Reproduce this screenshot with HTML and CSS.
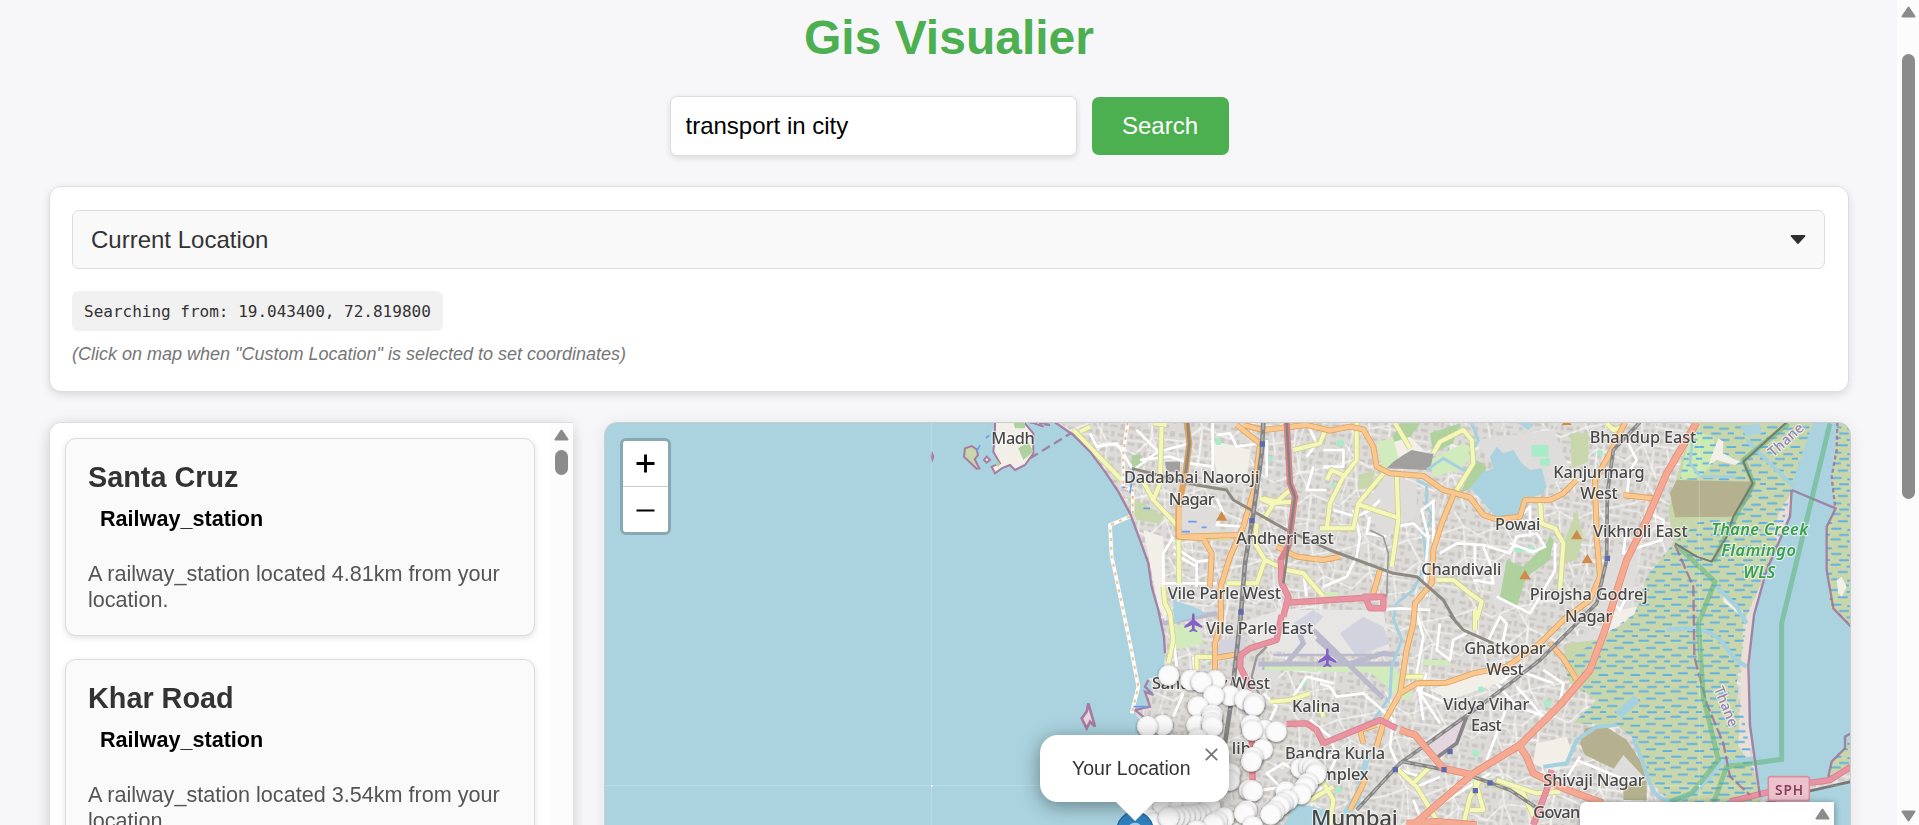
FILE: index.html
```html
<!DOCTYPE html>
<html lang="en">
<head>
<meta charset="utf-8">
<title>Gis Visualier</title>
<link rel="stylesheet" href="styles.css">
</head>
<body>
<main class="page">
  <h1 class="title">Gis Visualier</h1>
  <div class="search">
    <input class="search-input" type="text" value="transport in city">
    <button class="search-button">Search</button>
  </div>
  <section class="location">
    <div class="select"><span>Current Location</span><svg width="16" height="10" viewBox="0 0 16 10"><path d="M1.500 0h13q1.400.2.6 1.600L8.800 8.600q-.8.8-1.600 0L.9 1.600Q.1.2 1.500 0z" fill="#2f2f2f"/></svg></div>
    <div class="coords">Searching from: 19.043400, 72.819800</div>
    <p class="hint">(Click on map when "Custom Location" is selected to set coordinates)</p>
  </section>
  <div class="content">
    <section class="results">
      <div class="cards">
        <article class="card"><h2>Santa Cruz</h2><h3>Railway_station</h3><p>A railway_station located 4.81km from your location.</p></article>
        <article class="card"><h2>Khar Road</h2><h3>Railway_station</h3><p>A railway_station located 3.54km from your location.</p></article>
      </div>
      <div class="track"><svg class="arrow" width="15" height="12" viewBox="0 0 15 12"><path d="M7.500 1.500 13.500 10.500H1.500z"/></svg><i class="thumb"></i></div>
    </section>
    <section class="map">
      <svg class="tiles" viewBox="-1275 39 3738 1206">
        <defs>
          <pattern id="build" width="150" height="140" patternUnits="userSpaceOnUse" patternTransform="rotate(8)">
            <rect width="150" height="140" fill="#dddbd8"/>
            <g fill="#cbc8c4"><path d="M4 6h16v11H4zM27 3h9v18h-9zM44 10h21v9H44zM75 4h12v12H75zM95 8h22v8H95zM126 3h14v17h-14zM8 30h10v14H8zM25 33h20v8H25zM54 28h11v19H54zM76 29h15v8H76zM101 27h9v17h-9zM120 32h20v9h-20zM4 55h21v8H4zM35 52h12v17H35zM56 58h19v9H56zM86 49h10v18H86zM106 54h17v10h-17zM132 51h11v14h-11zM7 78h13v16H7zM29 81h17v8H29zM55 76h9v17h-9zM74 80h20v12H74zM105 75h10v13h-10zM125 79h19v9h-19zM5 107h20v9H5zM34 102h11v20H34zM55 108h18v10H55zM84 101h9v17h-9zM103 106h18v11h-18zM131 101h10v20h-10zM15 126h14v9H15zM70 127h22v7H70zM110 126h11v10h-11z"/></g>
            <path d="M0 48H52L68 70H150M70 0 72 70 60 140" fill="none" stroke="#ecebe8" stroke-width="4"/>
          </pattern>
          <pattern id="streets" width="290" height="250" patternUnits="userSpaceOnUse" patternTransform="rotate(-9)">
            <path d="M0 60 70 48 110 80 190 62 290 60M50 0 70 48 60 140 84 250M190 0V62L214 130 180 250M0 180 60 140 150 166 214 130 290 180M130 166 125 250M84 215H190" fill="none" stroke="#fff" stroke-width="5" opacity=".6"/>
          </pattern>
          <pattern id="marsh" width="96" height="76" patternUnits="userSpaceOnUse">
            <path d="M4 8h26M52 14h28M26 30h25M76 35h24M-20 35h24M6 52h26M54 56h24M30 71h24M80 70h20" stroke="#62afe2" stroke-width="6" stroke-linecap="round"/>
          </pattern>
          <filter id="soft" x="-2%" y="-2%" width="104%" height="104%"><feGaussianBlur stdDeviation="2"/></filter>
          <filter id="pin" x="-40%" y="-40%" width="180%" height="180%"><feDropShadow dx="0" dy="3" stdDeviation="4" flood-color="#000" flood-opacity=".55"/></filter>
          <radialGradient id="ball"><stop offset=".75" stop-color="#fbfbfb"/><stop offset="1" stop-color="#ececec"/></radialGradient>
          <path id="land" d="M75 37 130 75 180 125 225 185 265 245 300 310 330 390 355 460 365 530 385 600 400 660 405 740 398 800 356 805 370 850 345 850 355 890 310 905 335 935 325 1000 345 1100 335 1245H2463V1060L2395 1105 2190 1150 2160 945 2155 765 2172 615 2210 480 2255 380 2285 290 2280 240 2290 210 2320 120 2350 37z"/>
          <path id="hill" d="M0-15 17 14H-17z" fill="#d08b4b"/>
          <path id="plane" d="M0-28Q4-28 4-18V-8L27 10V16L4 8V18L12 25V29L0 25-12 29V25L-4 18V8L-27 16V10L-4-8V-18Q-4-28 0-28z" fill="#8461c4"/>
          <path id="stop" d="M-8-8H8V8H-8z" fill="#5d6aad"/>
          <g id="dot"><circle r="31" fill="url(#ball)" filter="url(#pin)"/></g>
        </defs>
        <rect x="-1275" y="39" width="3738" height="1206" fill="#aad3df"/>
        <g filter="url(#soft)">
          <use href="#land" fill="url(#build)"/>
          <use href="#land" fill="url(#streets)"/>
          <!-- open ground, parks, industrial areas -->
          <g fill="#dedddb"><path d="M455 290 560 295 575 375H455zM1330 90 1570 60 1620 180 1560 225 1500 270 1400 180zM1610 690 1690 710 1730 640 1690 560 1760 400 1830 420 1800 620zM645 765h100v60H665zM1380 520l40-60 20 100-40 60z"/><path d="M1070 190l90 30v100l-100 60-60-90z"/></g>
          <g fill="#f2efe9"><path d="M340 360 400 380 410 640 385 590zM1200 840l140-50 100-20-10 40-170 60zM1520 1000l90-20 20 60-60 50-60-30zM1720 610l100-20-20 60-90 50zM1060 110l70-40 60 60-100 30zM540 90l120 30-10 90-90-20z"/></g>
          <g fill="#aed19d"><path d="M1410 560 1430 450 1480 470 1550 400 1560 375 1570 390 1560 450 1490 500 1460 590zM305 135h30v38h-30zM1110 40h60l-30 40-60 20zM1200 70l90-30-20 60-60 30zM1310 210l30-60 30 20-20 50-60 30z"/></g>
          <g fill="#c8d7ab"><path d="M1620 70h55v85l-50 20zM1600 400 1640 300 1660 380 1640 450 1600 460zM290 260l50 20 60 40-10 20-70-10zM985 195l50-15-10 50-40 10z"/></g>
          <g fill="#d2ebbd"><path d="M1040 95l50-10 20 80-50 20zM420 650l80-10 20 60-90 20zM690 750l400 20 10 20-400-10zM1000 770l90-5 60 95-30 10zM870 550l50-5 10 15-60 5zM1180 750h80v16h-80zM1200 150l100-50 40 20-50 60-80 20z"/></g>
          <g fill="#a8ebc9"><circle cx="565" cy="95" r="10"/><circle cx="720" cy="147" r="8"/><path d="M1505 105l50 0v35h-50zM1530 145l30 0v22h-30zM920 90h20v18h-20zM1450 415l60-8v14l-55 6z"/><circle cx="1552" cy="880" r="11"/><circle cx="1353" cy="838" r="9"/><circle cx="1337" cy="1030" r="10"/><circle cx="1710" cy="128" r="9"/><circle cx="910" cy="225" r="7"/><circle cx="925" cy="1140" r="10"/><circle cx="822" cy="818" r="9"/></g>
          <!-- airport -->
          <g fill="#e8e6e4"><path d="M620 640 750 600 1060 600 1080 720 900 740 700 720z"/></g>
          <g fill="#d3d3df"><path d="M930 670l70-50 60 30 20 50-100 40zM570 690l80-10-10 40-80 15zM790 640l60-40 30 20-70 70z"/></g>
          <g fill="none" stroke="#bbbacd" stroke-width="15"><path d="M400 640 560 610M685 762H1108M850 660 1060 865M860 685l80 74M960 760 1060 730 1100 735M800 650 820 700 770 760" /><path d="M730 735H1110M700 742V780" stroke-width="7"/></g>
          <!-- retail and rail yards -->
          <path d="M1170 1030 1310 920 1300 985 1220 1050z" fill="#e4d6df"/>
          <path d="M1120 135 1145 120 1210 133 1200 180 1070 175 1090 155zM405 155h45v30h-40z" fill="#a1a09e"/>
          <!-- wetland -->
          <path d="M2000 37 2350 37 2320 120 2285 240 2250 380 2210 480 2155 610 2120 820 2130 1015 2180 1100 2190 1180 1920 1175 1850 1100 1810 985 1760 945 1630 940 1700 870 1620 820 1600 760 1610 700 1700 690 1780 640 1815 610 1850 500 1930 400 1915 300 1940 200 1970 100z" fill="#c8d7ab"/>
          <path d="M1980 60 2050 80 2060 150 2010 200 1950 210z" fill="#cdebb0"/>
          <path d="M1920 250 1940 210 2175 215 2160 265 2105 320 1935 322z" fill="#b5b18f"/>
          <path d="M1650 1000 1665 955 1720 945 1790 990 1830 1050 1850 1110 1850 1170H1780V1090L1665 1035z" fill="#b5b18f"/>
          <path d="M1745 1085 1780 1035 1850 1110 1780 1130z" fill="#dedddb"/>
          <path d="M2250 300 2285 250 2280 310 2245 400 2230 370zM2215 470 2240 430 2185 600 2160 1050 2125 1010 2140 640z" fill="#eadfd6"/>
          <path d="M2000 37 2350 37 2320 120 2285 240 2250 380 2210 480 2155 610 2120 820 2160 1015 2190 1180 1920 1175 1850 1100 1810 985 1760 945 1630 940 1700 870 1620 820 1600 760 1700 690 1815 610 1850 500 1930 400 2020 325 2110 320 2175 215 1950 208 1970 100z" fill="url(#marsh)"/>
          <path d="M2035 165 2065 85 2080 95 2078 130 2130 155 2115 165 2060 150zM2080 555l60 50-10 10-50-40z" fill="#f2efe9"/>
          <!-- lakes and rivers -->
          <path d="M1320 235 1355 190 1390 175 1380 140 1400 110 1420 130 1450 120 1475 160 1500 180 1535 175 1550 230 1540 250 1500 265 1485 320 1440 325 1400 325 1350 265zM2130 50 2190 40 2195 70 2150 80zM430 570l60 20 40 20-100 30zM1465 40h50l-20 20z" fill="#aad3df"/>
          <path d="M2350 37H2422L2415 130 2405 220 2417 295 2390 350 2395 480 2405 590 2463 650V970L2400 1080 2190 1170 2155 945 2160 700 2172 600 2210 480 2250 380 2285 290 2290 210z" fill="#aad3df"/>
          <path d="M2463 1110V1245H2190L2230 1175z" fill="#aad3df"/>
          <path id="east" d="M2422 37H2463V650L2400 590 2393 480 2390 350 2417 295 2405 220 2415 130zM2463 970 2445 1015 2405 1055 2395 1100 2463 1075z" fill="#c8d7ab"/>
          <path d="M2422 37H2463V650L2400 590 2393 480 2390 350 2417 295 2405 220 2415 130zM2463 970 2445 1015 2405 1055 2395 1100 2463 1075z" fill="url(#marsh)"/>
          <path d="M2420 510l15-10 15 30-15 30-10-10z" fill="#f2efe9"/>
          <g fill="none" stroke="#a5d1df" stroke-width="9"><path d="M1190 180 1240 145 1300 180 1330 170M1160 210 1190 225 1190 290 1210 320 1180 370 1190 460 1150 540 1100 580 1090 625 1115 690 1085 770 1080 860 1030 930M1325 40 1345 90 1320 130 1340 160"/><path d="M1810 985Q1840 1060 1860 1120T1940 1170 2070 1060L2200 1040M1540 1070 1610 1060 1640 990 1700 950 1760 945M2150 90 2230 170 2290 230" stroke-width="12"/><path d="M1990 60 1980 160 2010 200 2120 200" stroke-width="8"/><path d="M1910 660Q2030 640 2080 700 2110 750 2150 770M2060 530 2120 590 2150 640" stroke-width="13"/><path d="M1765 915 1820 865" stroke-width="26"/></g>
          <path d="M1000 1050 1020 1040 990 1180 940 1230 940 1200 975 1150zM760 1245 800 1180 890 1200 900 1245z" fill="#aad3df"/>
          <!-- local streets -->
          <g fill="none" stroke="#fff" stroke-width="8" stroke-linejoin="round">
            <path d="M180 70 200 110 260 100 310 180 390 120M320 60 385 125 480 100M330 150 420 140 480 160 550 170M548 37V200M560 75 600 70 620 110 690 100M430 380 400 430V520H560M430 410 500 455 540 450M500 455V530M430 430 500 470M710 90V200M830 37 860 100 830 140M850 170 830 240 890 240M880 120h60v50h-60M910 300 980 320 1020 300 1050 270M970 300 990 380 980 440 950 500 880 530M820 490 830 560M560 265 580 310 560 345 650 350M1020 320l-10 50 60 10M1100 350 1150 340 1190 380"/>
            <path d="M1215 270 1175 300 1195 380 1185 500 1190 560M1210 270 1210 400M1230 430 1280 400 1360 405 1440 430 1460 380 1520 370 1545 410 1510 425 1440 400M1335 400V500M1360 410 1380 460 1390 520 1330 510M1480 310 1500 290V380M1575 400V480L1530 560 1500 610 1400 560M870 820 900 830 920 860 1000 850 1090 930M1040 600 1110 595 1200 600M1160 610 1180 680 1160 790 1180 930M1230 640 1220 720 1260 750 1270 690 1310 670M1370 700 1410 620 1430 640 1410 740M1160 840 1240 875M1190 790 1170 850 1230 940M1430 890 1370 1050M1410 820 1460 780 1570 820M1400 820 1460 890 1550 920M1540 780 1600 820 1590 880M1460 830 1540 920M1160 1130 1230 1100M1150 1170 1180 1245M1220 1190l160-100M1640 1050 1800 1115M1650 1040l-50 80M1730 560 1770 600 1790 560M1790 90 1820 150 1800 180 1790 260M1860 310 1900 330 1895 390 1830 410 1780 430 1790 350M1090 930 1080 1010 1110 1080 1170 1100"/>
            <path d="M430 680 440 770M490 740 500 840M430 920 460 850M700 850 740 890 720 930M840 930 900 980 920 1040M790 860l40-60 80 20M860 1030l60 10-40 90-60 40M640 1150 760 1130M710 1090l50-30 60 40-50 50z"/>
          </g>
          <!-- yellow roads -->
          <g fill="none" stroke="#cdd48a" stroke-width="17" stroke-linejoin="round"><path d="M130 60 275 210M150 65 180 50M395 37 390 220 370 270M340 215 370 270 445 350 447 520M700 265 740 275 780 240M690 265 720 280 790 275M735 275 700 330M680 340 675 400 705 450 770 480 820 490 880 560M705 450 680 520H590M520 382H600M400 530 405 580 420 610 430 690 415 760M370 40 410 45M890 360 900 280 940 200 980 150 980 37M870 355 970 355 985 280 1060 190M990 285 1110 325M790 120 870 100 890 50M500 780V740L550 742M720 875 780 870 840 850M1095 39 1140 115M1210 130 1230 95 1300 60 1325 90 1330 160 1280 240M1100 190 1105 330 1085 470M1220 510 1270 510 1320 550 1355 575 1340 630M1335 600V660M1530 270 1535 340 1575 355 1600 400 1590 540M890 210 905 180 950 200M1120 800H1180M1105 1080 1160 1130 1220 1230M1200 1070 1150 1120M1350 1110 1320 1160 1300 1245M1350 1110 1480 1150 1520 1240M1400 1110 1520 1150 1590 1145M1335 1110 1360 1200 1320 1200M870 1100 910 1170 900 1245M840 1170 910 1130M870 890 880 920M1730 40l20 20 30-10"/></g>
          <g fill="none" stroke="#f5f6ba" stroke-width="12" stroke-linejoin="round"><path d="M130 60 275 210M150 65 180 50M395 37 390 220 370 270M340 215 370 270 445 350 447 520M700 265 740 275 780 240M690 265 720 280 790 275M735 275 700 330M680 340 675 400 705 450 770 480 820 490 880 560M705 450 680 520H590M520 382H600M400 530 405 580 420 610 430 690 415 760M370 40 410 45M890 360 900 280 940 200 980 150 980 37M870 355 970 355 985 280 1060 190M990 285 1110 325M790 120 870 100 890 50M500 780V740L550 742M720 875 780 870 840 850M1095 39 1140 115M1210 130 1230 95 1300 60 1325 90 1330 160 1280 240M1100 190 1105 330 1085 470M1220 510 1270 510 1320 550 1355 575 1340 630M1335 600V660M1530 270 1535 340 1575 355 1600 400 1590 540M890 210 905 180 950 200M1120 800H1180M1105 1080 1160 1130 1220 1230M1200 1070 1150 1120M1350 1110 1320 1160 1300 1245M1350 1110 1480 1150 1520 1240M1400 1110 1520 1150 1590 1145M1335 1110 1360 1200 1320 1200M870 1100 910 1170 900 1245M840 1170 910 1130M870 890 880 920M1730 40l20 20 30-10"/></g>
          <!-- orange roads -->
          <g fill="none" stroke="#dfa35d" stroke-width="18" stroke-linejoin="round"><path d="M470 37 478 100 465 200 445 290V380L520 385 545 430 540 530M447 380 640 375M620 45 690 100 675 230 640 350 600 440 572 530 573 640 555 700V780M640 45 700 60 830 45 900 62 960 50 1000 58 1030 110 1040 170 1080 190 1180 198 1240 240 1320 262 1360 315 1400 328 1470 320 1485 270 1560 270 1600 250 1640 210M740 410 800 440 880 450 930 440M1270 255 1235 340 1210 420 1205 520 1155 580 1150 640 1130 720 1110 850 1060 940 1040 1010M1050 480 1030 550M550 745 640 730M1110 850 1160 820 1250 818 1330 790 1430 770 1530 700 1600 630 1680 570 1710 500 1700 380 1695 210 1740 130 1785 37M1560 700 1600 745 1640 810M1040 945 990 960 1000 1000M1010 1100 960 1200M1780 255 1870 265"/></g>
          <g fill="none" stroke="#fac78e" stroke-width="13" stroke-linejoin="round"><path d="M447 290V380L520 385 545 430 540 530M447 380 640 375M620 45 690 100 675 230 640 350 600 440 572 530 573 640 555 700V780M640 45 700 60 830 45 900 62 960 50 1000 58 1030 110 1040 170 1080 190 1180 198 1240 240 1320 262 1360 315 1400 328 1470 320 1485 270 1560 270 1600 250 1640 210M740 410 800 440 880 450 930 440M1270 255 1235 340 1210 420 1205 520 1155 580 1150 640 1130 720 1110 850 1060 940 1040 1010M1050 480 1030 550M550 745 640 730M1110 850 1160 820 1250 818 1330 790 1430 770 1530 700 1600 630 1680 570 1710 500 1700 380 1695 210 1740 130 1785 37M1560 700 1600 745 1640 810M1040 945 990 960 1000 1000M1010 1100 960 1200M1780 255 1870 265"/></g>
          <!-- metro and rail -->
          <g fill="none" stroke-linejoin="round"><path d="M305 175 500 225 590 240 610 270 770 360 900 420 1090 490 1160 500 1240 570 1280 640M473 39 478 100 467 190M1260 615 1300 660 1390 700" stroke="#8d8a82" stroke-width="9"/><path d="M1020 360 1060 380 1075 430 1070 560" stroke="#9c9c9c" stroke-width="5"/><path d="M700 37 695 130 670 310 645 460 632 620 615 770 600 900 585 1000" stroke="#868686" stroke-width="14"/><path d="M700 37 695 130 670 310 645 460 632 620 615 770 600 900" stroke="#b0b0b0" stroke-width="5" stroke-dasharray="22 14"/><path d="M1830 37 1750 120 1732 250 1730 450 1700 580 1640 640 1530 750 1440 820 1320 910 1110 1060 980 1200M1310 920 1280 1000 1210 1050M1120 1055 1300 1090 1440 1140 1560 1220" stroke="#868686" stroke-width="11"/><path d="M1830 37 1750 120 1732 250 1730 450 1700 580 1640 640 1530 750 1440 820 1320 910 1110 1060 980 1200M1120 1055 1300 1090 1440 1140 1560 1220" stroke="#b5b5b5" stroke-width="4" stroke-dasharray="22 14"/><path d="M710 710 680 740 665 800 690 860" stroke="#999" stroke-width="7"/></g>
          <!-- trunk roads -->
          <g fill="none" stroke="#d9838d" stroke-width="19" stroke-linejoin="round"><path d="M755 615 740 690 660 715 632 735 630 770 665 840M770 37 780 220 795 260 775 410 752 450 755 520 775 560 760 620M775 578 900 570 1060 560H1005L1020 595H1060V560M665 980 668 1110M770 942 830 940 860 960 880 1000 1050 930 1100 955M1565 1080 1550 1140 1510 1245M2100 1175 2300 1125 2400 1110 2463 1070"/></g>
          <g fill="none" stroke="#e892a2" stroke-width="14"><path d="M755 615 740 690 660 715 632 735 630 770 665 840M752 450 755 520 775 560 760 620M775 578 900 570 1060 560H1005L1020 595H1060V560M770 942 830 940 860 960 880 1000 1050 930 1100 955M1565 1080 1550 1140 1510 1245M2100 1175 2300 1125 2400 1110 2463 1070M665 1080V1110"/></g>
          <path d="M770 37 780 220 795 260 775 410 760 520" fill="none" stroke="#89837f" stroke-width="8"/>
          <g fill="none" stroke="#e58f78" stroke-width="22" stroke-linejoin="round"><path d="M2000 37 1910 190 1850 330 1790 450 1755 560 1725 660 1680 780 1590 885 1470 1005 1330 1090 1150 1245M1110 960 1155 975 1240 1075 1330 1095M1470 1010 1490 1040 1510 1090 1600 1135 1720 1180M1130 1240 1220 1235 1340 1245"/></g>
          <g fill="none" stroke="#f6a992" stroke-width="17" stroke-linejoin="round"><path d="M2000 37 1910 190 1850 330 1790 450 1755 560 1725 660 1680 780 1590 885 1470 1005 1330 1090 1150 1245M1110 960 1155 975 1240 1075 1330 1095M1470 1010 1490 1040 1510 1090 1600 1135 1720 1180M1130 1240 1220 1235 1340 1245"/></g>
          <path d="M2210 1178 2330 1145 2463 1115" fill="none" stroke="#777" stroke-width="8"/>
          <!-- coast boundaries -->
          <g fill="none" stroke="#9b6795" stroke-width="7" opacity=".75"><path d="M75 37 130 75 180 125 225 185 265 245 300 310 330 390 355 460 365 530 385 600 402 680 405 730M355 810 345 830 370 855 345 845 360 890 315 900 340 920 325 945M2285 240 2417 295 2390 350 2390 480 2410 595 2463 650M2285 240 2280 320 2210 480 2172 615 2155 765 2160 945 2190 1160M2463 970 2445 980 2445 1015 2405 1055 2395 1100"/><path d="M0 145 125 68M0 37 60 45" stroke-dasharray="28 14"/><path d="M2422 37 2420 120 2405 200 2415 290" stroke-dasharray="12 8"/><path d="M1935 405 1990 530 1993 740 2030 880 2080 1000 2100 1100 2160 1155" stroke-dasharray="34 10"/></g>
          <g fill="none" stroke="#5db27a" stroke-width="15" opacity=".55"><path d="M2275 40 2140 150 2170 220 2090 370 2050 455M1945 410 2055 515 2005 640 2020 860 2065 1050 1985 1150 1920 1175M2050 1180 2090 1070 2255 1048 2255 640 2400 40"/></g>
          <path d="M2270 37 2140 155 2168 220 2110 320 2090 380 2045 455 2000 440 1935 400" fill="none" stroke="#777a6c" stroke-width="6"/>
          <!-- ferry route -->
          <path d="M300 320 240 345 245 440 275 580 300 700 325 830 305 910" fill="none" stroke="#fff" stroke-width="11"/><path d="M300 320 240 345 245 440 275 580 300 700 325 830 305 910" fill="none" stroke="#f1c99a" stroke-width="7" stroke-dasharray="10 16"/>
          <path d="M293 37 280 130 280 230 308 240 308 310" fill="none" stroke="#fff" stroke-width="10"/><path d="M293 37 280 130 280 230 308 240 308 310" fill="none" stroke="#f1b689" stroke-width="6" stroke-dasharray="9 13"/>
          <!-- islands -->
          <g fill="#f2efe9" stroke="#a77ba0" stroke-width="6"><path d="M-105 35V80L-110 125 -90 160 -115 170 -105 190 -85 175 -60 165 -45 180 -15 165 10 130V70L-20 35zM-130 140l10 10-10 8-8-8z"/><path d="M-195 115-175 108-160 118-156 135-166 148-152 175-160 176-182 155-198 140z" fill="#c8d7ab"/><path d="M155 925 170 905 175 880 182 905 195 950 180 935 170 955z" fill="#e6d6e0" stroke-width="8"/><path d="M0 35 40 50 30 40 55 37M-293 132l3 8-3 8-2-8z"/></g>
          <path d="M-50 37h35v18h-30zM-35 115l30-20 15 30-30 25zM-98 150l8 10-5 12-8-8z" fill="#aed19d"/>
          <path d="M-132 84 -122 76M-150 105-160 125M310 180l-10 70M275 232h10M340 295h20M475 335h25M455 365h25M515 352h15M310 890h40" fill="none" stroke="#6a9cf0" stroke-width="5"/>
        </g>
        <use href="#hill" x="575" y="318"/><use href="#hill" x="1485" y="494"/><use href="#hill" x="1640" y="374"/><use href="#hill" x="1672" y="446"/><path d="M1595 45l6-8h18l6 8z" fill="#d08b4b"/>
        <use href="#plane" x="490" y="638"/><use href="#plane" x="892" y="743"/>
        <use href="#stop" x="697" y="102"/><use href="#stop" x="666" y="332"/><use href="#stop" x="633" y="606"/><use href="#stop" x="1732" y="445"/><use href="#stop" x="1096" y="1079"/><use href="#stop" x="1242" y="1079"/><use href="#stop" x="1260" y="1025"/><use href="#stop" x="1336" y="1142"/><use href="#stop" x="1380" y="1119"/>
        <path d="M-295 39V1245M857 39V1245M2008 39V1245M-1275 1127H2463" stroke="#fff" stroke-width="2" opacity=".28"/><path d="M-297 1125h5v5h-5zM2006 1125h5v5h-5z" fill="#fff"/>
        <g class="labels">
          <text x="-51" y="102" textLength="130">Madh</text>
          <text x="485" y="220" textLength="406">Dadabhai Naoroji</text><text x="485" y="284" textLength="138">Nagar</text>
          <text x="765" y="401" textLength="292">Andheri East</text>
          <text x="583" y="566" textLength="340">Vile Parle West</text><text x="689" y="672" textLength="322">Vile Parle East</text>
          <text x="543" y="838" textLength="354">Santacruz West</text><text x="858" y="906" textLength="144">Kalina</text>
          <text x="915" y="1046" textLength="300">Bandra Kurla</text><text x="915" y="1111" textLength="202">Complex</text><text x="634" y="1033">lib</text>
          <text x="1294" y="495" textLength="240">Chandivali</text><text x="1463" y="360" textLength="136">Powai</text>
          <text x="1839" y="98" textLength="320">Bhandup East</text><text x="1707" y="205" textLength="274">Kanjurmarg</text><text x="1707" y="268" textLength="112">West</text>
          <text x="1831" y="381" textLength="284">Vikhroli East</text><text x="1676" y="571" textLength="354">Pirojsha Godrej</text><text x="1676" y="635" textLength="142">Nagar</text>
          <text x="1425" y="732" textLength="244">Ghatkopar</text><text x="1425" y="796" textLength="112">West</text>
          <text x="1369" y="899" textLength="258">Vidya Vihar</text><text x="1369" y="963" textLength="92">East</text>
          <text x="1692" y="1128" textLength="304">Shivaji Nagar</text><text x="1600" y="1223" textLength="180">Govandi</text>
          <text class="big" x="973" y="1247" textLength="260">Mumbai</text>
          <text class="green" x="2189" y="374" textLength="290">Thane Creek</text><text class="green" x="2186" y="439" textLength="224">Flamingo</text><text class="green" x="2188" y="504" textLength="96">WLS</text>
          <text class="purple" transform="translate(2277 100) rotate(-42)" textLength="128">Thane</text><text class="purple" transform="translate(2075 895) rotate(68)" textLength="126">Thane</text>
        </g>
        <rect x="2215" y="1100" width="123" height="72" rx="6" fill="#ecc3cc" stroke="#d98ea0" stroke-width="5"/><text class="shield" x="2277" y="1155" textLength="84">SPH</text>
        <!-- result markers -->
        <g>
          <use href="#dot" x="482" y="810"/><use href="#dot" x="556" y="812"/><use href="#dot" x="514" y="816"/><use href="#dot" x="416" y="796"/><use href="#dot" x="600" y="857"/><use href="#dot" x="551" y="857"/><use href="#dot" x="504" y="890"/><use href="#dot" x="645" y="869"/><use href="#dot" x="674" y="879"/><use href="#dot" x="672" y="887"/>
          <use href="#dot" x="547" y="914"/><use href="#dot" x="546" y="926"/><use href="#dot" x="500" y="946"/><use href="#dot" x="546" y="940"/><use href="#dot" x="547" y="950"/><use href="#dot" x="398" y="945"/><use href="#dot" x="352" y="949"/><use href="#dot" x="502" y="987"/>
          <use href="#dot" x="664" y="945"/><use href="#dot" x="703" y="960"/><use href="#dot" x="667" y="961"/><use href="#dot" x="739" y="965"/><use href="#dot" x="698" y="1018"/><use href="#dot" x="668" y="1042"/><use href="#dot" x="664" y="1054"/><use href="#dot" x="600" y="1090"/><use href="#dot" x="598" y="1112"/><use href="#dot" x="658" y="1140"/><use href="#dot" x="668" y="1143"/>
          <use href="#dot" x="813" y="1074"/><use href="#dot" x="838" y="1070"/><use href="#dot" x="850" y="1076"/><use href="#dot" x="860" y="1086"/><use href="#dot" x="857" y="1093"/><use href="#dot" x="833" y="1120"/><use href="#dot" x="825" y="1132"/><use href="#dot" x="768" y="1145"/><use href="#dot" x="813" y="1152"/><use href="#dot" x="773" y="1170"/><use href="#dot" x="757" y="1180"/><use href="#dot" x="748" y="1188"/><use href="#dot" x="732" y="1205"/><use href="#dot" x="722" y="1213"/>
          <use href="#dot" x="320" y="1200"/><use href="#dot" x="350" y="1190"/><use href="#dot" x="400" y="1190"/><use href="#dot" x="450" y="1193"/><use href="#dot" x="490" y="1188"/><use href="#dot" x="540" y="1190"/><use href="#dot" x="352" y="1225"/><use href="#dot" x="370" y="1240"/><use href="#dot" x="512" y="1212"/><use href="#dot" x="496" y="1214"/><use href="#dot" x="480" y="1216"/><use href="#dot" x="464" y="1218"/><use href="#dot" x="448" y="1220"/><use href="#dot" x="432" y="1221"/><use href="#dot" x="416" y="1222"/><use href="#dot" x="582" y="1223"/><use href="#dot" x="560" y="1235"/><use href="#dot" x="550" y="1242"/><use href="#dot" x="500" y="1262"/><use href="#dot" x="650" y="1202"/><use href="#dot" x="643" y="1210"/><use href="#dot" x="668" y="1250"/>
        </g>
        <circle cx="315" cy="1260" r="54" fill="#3080bd" stroke="#246a9f" stroke-width="4"/><circle cx="315" cy="1262" r="24" fill="#fff" opacity=".6"/>
      </svg>
      <div class="zoom"><button><svg width="19" height="19" viewBox="0 0 19 19"><path d="M.5 9.500h18M9.500.5v18" stroke="#000" stroke-width="2.900"/></svg></button><button><svg width="19" height="19" viewBox="0 0 19 19"><path d="M.5 9.500h18" stroke="#000" stroke-width="2.100"/></svg></button></div>
      <div class="popup">Your Location<svg class="close" width="13" height="13" viewBox="0 0 13 13"><path d="M.8.800l11.400 11.400M12.200.8.800 12.200" stroke="#757575" stroke-width="1.800"/></svg><i class="tip"></i></div>
      <div class="legend"><div class="track"><svg class="arrow" width="15" height="12" viewBox="0 0 15 12"><path d="M7.500 1.500 13.500 10.500H1.500z"/></svg></div></div>
    </section>
  </div>
</main>
<aside class="scrollbar"><svg class="arrow" width="15" height="12" viewBox="0 0 15 12"><path d="M7.500 1.500 13.500 10.500H1.500z"/></svg><i class="thumb"></i><svg class="arrow down" width="15" height="12" viewBox="0 0 15 12"><path d="M7.500 10.500 13.500 1.500H1.500z"/></svg></aside>
</body>
</html>
```
FILE: styles.css
```css
* { box-sizing: border-box; }
body { margin: 0; height: 825px; overflow: hidden; display: flex; background: #f7f7fa; color: #333; font-family: "Liberation Sans", Arial, sans-serif; font-size: 24px; }
.page { flex: 1; padding: 9px 48px 0 49px; height: 825px; overflow: hidden; }
.title { margin: 0; font-size: 48px; line-height: 58px; text-align: center; color: #4caf50; }
.search { display: flex; justify-content: center; align-items: center; gap: 15px; margin-top: 29px; }
.search-input { width: 407px; height: 60px; padding: 0 15px; border: 1px solid #ddd; border-radius: 7px; background: #fff; color: #000; font: 24px "Liberation Sans", Arial, sans-serif; box-shadow: 0 2px 6px rgba(0,0,0,.12); outline: 0; }
.search-button { width: 137px; height: 58px; border: 0; border-radius: 7px; background: #4caf50; color: #fff; font: 24px "Liberation Sans", Arial, sans-serif; }
.location { height: 206px; margin-top: 30px; padding: 23px 23px 0 22px; border: 1px solid #ddd; border-radius: 12px; background: #fff; box-shadow: 0 3px 8px rgba(0,0,0,.12); }
.select { display: flex; justify-content: space-between; align-items: center; height: 59px; padding: 0 18px; border: 1px solid #ddd; border-radius: 7px; background: #f9f9f9; }
.coords { display: inline-block; height: 40px; margin-top: 22px; padding: 0 12px; border-radius: 6px; background: #f1f1f1; font: 16px/41px "DejaVu Sans Mono", monospace; }
.hint { margin: 11px 0 0; font-size: 18px; line-height: 24px; font-style: italic; color: #757575; }
.content { display: flex; align-items: flex-start; gap: 31px; margin-top: 30px; filter: drop-shadow(0 2px 8px rgba(0,0,0,.08)); }
.results { display: flex; width: 524px; height: 750px; border: 1px solid #ddd; border-right: 0; border-radius: 12px 0 0 12px; background: #fff; box-shadow: 0 4px 16px rgba(0,0,0,.1); }
.cards { flex: 1; padding: 15px 15px 0; }
.card { height: 198px; margin-bottom: 23px; padding: 22px; border: 1px solid #ddd; border-radius: 11px; background: #fafafa; box-shadow: 0 2px 6px rgba(0,0,0,.12); }
.card h2 { margin: 0; font-size: 28.8px; line-height: 33px; color: #333; }
.card h3 { margin: 12px 0 0 12px; font-size: 21.6px; line-height: 26px; color: #000; }
.card p { margin: 29px 0 0; font-size: 21.6px; line-height: 26px; color: #555; }
.track { width: 23px; padding-top: 6px; background: #fcfcfc; display: flex; flex-direction: column; align-items: center; }
.arrow { display: block; flex: none; fill: #8b8b8b; stroke: #8b8b8b; stroke-width: 2; stroke-linejoin: round; }
.thumb { display: block; width: 13px; border-radius: 7px; background: #8b8b8b; }
.track .thumb { height: 25px; margin-top: 9px; }
.map { position: relative; flex: 1; height: 750px; margin-right: -2px; border: 1px solid #ccc; border-radius: 13px; background: #aad3df; overflow: hidden; }
.tiles { display: block; width: 1246px; height: 402px; }
.labels { font-family: "Noto Sans", sans-serif; font-size: 49px; font-weight: 500; fill: #484848; stroke: rgba(255,255,255,.6); stroke-width: 7px; stroke-linejoin: round; paint-order: stroke; text-anchor: middle; filter: blur(.8px); }
.labels .big { font-size: 67px; }
.labels .green { font-style: italic; font-weight: 600; fill: #3a9f4c; }
.labels .purple { font-size: 42px; fill: #9b81ad; }
.shield { font: 600 41px "Noto Sans", sans-serif; fill: #8a3c5c; text-anchor: middle; }
.zoom { position: absolute; left: 15px; top: 15px; width: 51px; border: 3px solid rgba(0,0,0,.2); border-radius: 6px; background-clip: padding-box; }
.zoom button { display: flex; align-items: center; justify-content: center; width: 45px; height: 46px; padding: 0; border: 0; border-bottom: 1px solid #ccc; border-radius: 3px 3px 0 0; background: #fff; }
.zoom button:last-child { height: 45px; padding-top: 2px; border: 0; border-radius: 0 0 3px 3px; }
.popup { position: absolute; left: 435px; top: 312px; width: 189px; height: 67px; padding-left: 32px; border-radius: 18px; background: #fff; font-size: 19.5px; line-height: 67px; color: #333; box-shadow: 0 4px 20px rgba(0,0,0,.4); white-space: nowrap; }
.close { position: absolute; right: 11px; top: 13px; }
.tip { position: absolute; left: 75px; top: 66px; width: 40px; height: 20px; background: #fff; clip-path: polygon(0 0, 100% 0, 50% 100%); }
.legend { position: absolute; left: 975px; top: 379px; width: 254px; height: 200px; display: flex; justify-content: flex-end; border-radius: 6px 0 0 6px; background: #fff; box-shadow: 0 1px 7px rgba(0,0,0,.4); }
.scrollbar { width: 22px; height: 825px; padding: 6px 0 3px; display: flex; flex-direction: column; align-items: center; background: #fcfcfc; }
.scrollbar .thumb { height: 445px; margin-top: 36px; }
.scrollbar .down { margin-top: auto; }
```
